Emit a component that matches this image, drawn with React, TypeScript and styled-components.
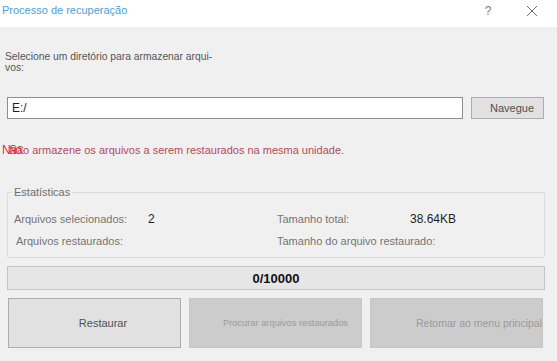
import React from "react";
import styled, { createGlobalStyle } from "styled-components";

const Global = createGlobalStyle`
  html, body { margin: 0; padding: 0; background: #f0f0f0; }
  body { font-family: "Liberation Sans", Arial, sans-serif; }
  * { box-sizing: border-box; }
`;

const Window = styled.div`
  width: 557px;
  height: 361px;
  background: #f0f0f0;
  display: flex;
  flex-direction: column;
  overflow: hidden;
`;

const TitleBar = styled.div`
  height: 27px;
  background: #ffffff;
  display: flex;
  align-items: flex-start;
  padding: 3px 0 0 2px;
`;

const Title = styled.div`
  flex: 1;
  font-size: 11px;
  line-height: 15px;
  color: #4aa2d8;
`;

const TitleButton = styled.div<{ $w: number }>`
  width: ${(p) => p.$w}px;
  height: 16px;
  display: flex;
  align-items: center;
  justify-content: center;
  color: #7a7a7a;
  font-size: 12px;
`;

const Content = styled.div`
  flex: 1;
  display: flex;
  flex-direction: column;
  padding: 0 12px 0 7px;
`;

const Prompt = styled.div`
  margin: 24px 0 0 -2px;
  font-size: 10.3px;
  line-height: 11px;
  color: #555555;
`;

const PathRow = styled.div`
  display: flex;
  gap: 8px;
  margin-top: 24px;
  height: 22px;
`;

const PathInput = styled.div`
  width: 456px;
  height: 22px;
  background: #ffffff;
  border: 1px solid #8e8e8e;
  padding-left: 4px;
  font-size: 12px;
  line-height: 20px;
  color: #1e1e1e;
`;

const Button = styled.div<{ $disabled?: boolean; $shift?: number }>`
  display: flex;
  align-items: center;
  justify-content: center;
  background: ${(p) => (p.$disabled ? "#cccccc" : "#e1e1e1")};
  border: 1px solid ${(p) => (p.$disabled ? "#c6c6c6" : "#adadad")};
  color: ${(p) => (p.$disabled ? "#9a9a9a" : "#505050")};
  padding-left: ${(p) => p.$shift ?? 0}px;
  white-space: nowrap;
  overflow: hidden;
`;

const BrowseButton = styled(Button)`
  width: 73px;
  font-size: 11px;
`;

const Warning = styled.div`
  position: relative;
  margin: 24px 0 0 2px;
  font-size: 11px;
  line-height: 14px;
  color: #b44a5c;
`;

const WarningTag = styled.span`
  position: absolute;
  left: -7px;
  top: -1px;
  font-family: "Liberation Sans", "Noto Sans CJK SC", sans-serif;
  font-size: 12px;
  line-height: 16px;
  color: #e8283a;
  letter-spacing: -1px;
`;

const Group = styled.fieldset`
  margin: 29px 0 0 0;
  padding: 9px 0 5px 6px;
  border: 1px solid #dadada;
  border-radius: 2px;
  display: grid;
  grid-template-columns: 134px 129px 133px 1fr;
  grid-auto-rows: 22px;
  align-items: center;
`;

const Legend = styled.legend`
  margin-left: -2px;
  padding: 0 2px;
  font-size: 11px;
  line-height: 13px;
  color: #6e6e6e;
`;

const Label = styled.div<{ $indent?: number }>`
  font-size: 11px;
  color: #747474;
  padding-left: ${(p) => p.$indent ?? 0}px;
  white-space: nowrap;
`;

const Value = styled.div`
  font-size: 12px;
  color: #1e1e1e;
`;

const Progress = styled.div`
  margin-top: 8px;
  height: 24px;
  background: #e6e6e6;
  border: 1px solid #c4c4c4;
  display: flex;
  align-items: center;
  justify-content: center;
  font-size: 13px;
  font-weight: bold;
  color: #111111;
`;

const ActionRow = styled.div`
  margin: 8px 2px 0 1px;
  height: 50px;
  display: grid;
  grid-template-columns: repeat(3, 1fr);
  gap: 8px;
`;

const ActionButton = styled(Button)<{ $size: number }>`
  font-size: ${(p) => p.$size}px;
`;

export default function App() {
  return (
    <>
      <Global />
      <Window>
        <TitleBar>
          <Title>Processo de recuperação</Title>
          <TitleButton $w={16}>?</TitleButton>
          <TitleButton $w={28} />
          <TitleButton $w={16}>
            <svg width="12" height="12" viewBox="0 0 12 12">
              <path d="M1 1 L11 11 M11 1 L1 11" stroke="#6e6e6e" strokeWidth="1" />
            </svg>
          </TitleButton>
          <TitleButton $w={17} />
        </TitleBar>
        <Content>
          <Prompt>
            Selecione um diretório para armazenar arqui-
            <br />
            vos:
          </Prompt>
          <PathRow>
            <PathInput>E:/</PathInput>
            <BrowseButton $shift={9}>Navegue</BrowseButton>
          </PathRow>
          <Warning>
            <WarningTag>Não:</WarningTag>
            Não armazene os arquivos a serem restaurados na mesma unidade.
          </Warning>
          <Group>
            <Legend>Estatísticas</Legend>
            <Label>Arquivos selecionados:</Label>
            <Value>2</Value>
            <Label>Tamanho total:</Label>
            <Value>38.64KB</Value>
            <Label $indent={2}>Arquivos restaurados:</Label>
            <Value />
            <Label>Tamanho do arquivo restaurado:</Label>
            <Value />
          </Group>
          <Progress>0/10000</Progress>
          <ActionRow>
            <ActionButton $size={11} $shift={17}>
              Restaurar
            </ActionButton>
            <ActionButton $size={9.3} $disabled $shift={20}>
              Procurar arquivos restaurados
            </ActionButton>
            <ActionButton $size={10.5} $disabled $shift={45}>
              Retomar ao menu principal
            </ActionButton>
          </ActionRow>
        </Content>
      </Window>
    </>
  );
}
